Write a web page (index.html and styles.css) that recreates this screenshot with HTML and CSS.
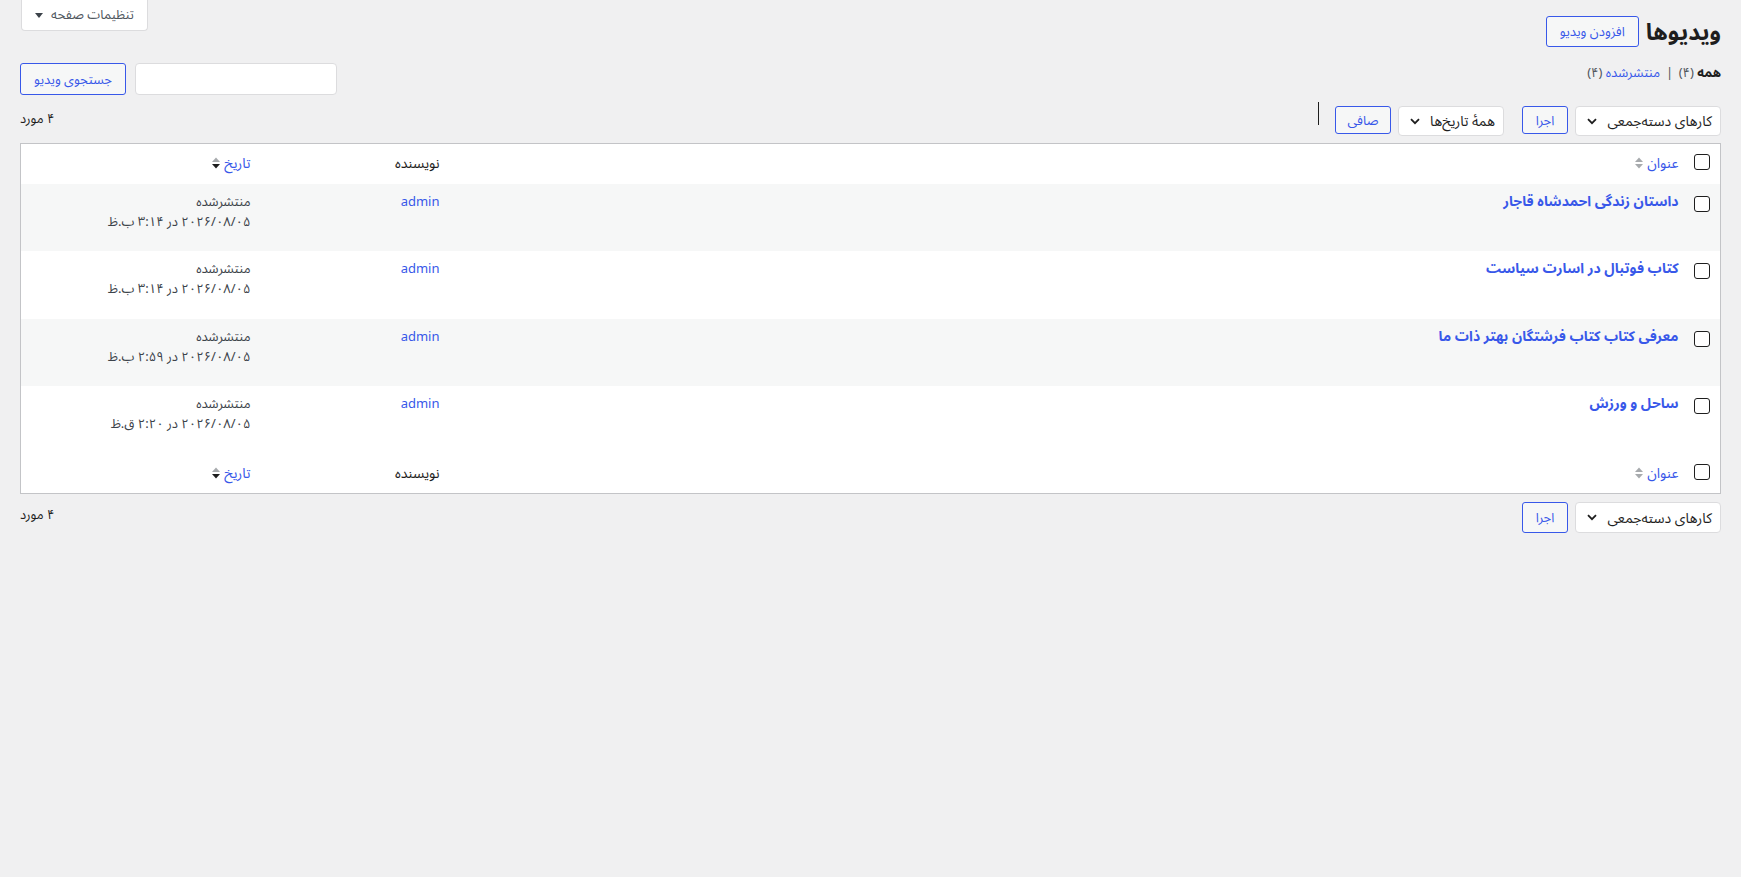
FILE: index.html
```html
<!DOCTYPE html>
<html lang="fa" dir="rtl">
<head>
<meta charset="utf-8">
<title>ویدیوها</title>
<link rel="stylesheet" href="styles.css">
</head>
<body>
<div class="wrap">
  <div class="top">
    <div class="heading">
      <h1 class="page-title">ویدیوها</h1>
      <a class="btn add-btn">افزودن ویدیو</a>
    </div>
    <button class="screen-options">تنظیمات صفحه <span class="tri"></span></button>
  </div>

  <div class="views-row">
    <ul class="subsubsub">
      <li><b>همه</b> <span class="count">(۴)</span> <span class="sep">|</span></li>
      <li><a class="link">منتشرشده <span class="count">(۴)</span></a></li>
    </ul>
    <div class="search-box">
      <input class="search-input" type="text">
      <a class="btn search-btn">جستجوی ویدیو</a>
    </div>
  </div>

  <div class="tablenav">
    <div class="actions">
      <div class="select bulk">کارهای دسته‌جمعی<svg class="chev" width="10" height="7" viewBox="0 0 10 7"><path d="M1 1.2 L5 5.2 L9 1.2" fill="none" stroke="#1e1e1e" stroke-width="1.8"/></svg></div>
      <a class="btn small-btn apply">اجرا</a>
      <div class="select dates">همهٔ تاریخ‌ها<svg class="chev" width="10" height="7" viewBox="0 0 10 7"><path d="M1 1.2 L5 5.2 L9 1.2" fill="none" stroke="#1e1e1e" stroke-width="1.8"/></svg></div>
      <a class="btn small-btn filter">صافی</a>
      <span class="caret-line"></span>
    </div>
    <div class="num">۴ مورد</div>
  </div>

  <table class="list">
    <colgroup>
      <col class="c-check">
      <col>
      <col class="c-author">
      <col class="c-date">
    </colgroup>
    <thead>
      <tr>
        <th class="check"><input type="checkbox" class="cb"></th>
        <th class="sortable"><a class="link">عنوان</a><svg class="sort" width="8" height="12" viewBox="0 0 8 12"><path d="M0 5 L4 0.5 L8 5 Z" fill="#a7aaad"/><path d="M0 7 L8 7 L4 11.5 Z" fill="#a7aaad"/></svg></th>
        <th>نویسنده</th>
        <th class="sortable"><a class="link">تاریخ</a><svg class="sort" width="8" height="12" viewBox="0 0 8 12"><path d="M0 5 L4 0.5 L8 5 Z" fill="#a7aaad"/><path d="M0 7 L8 7 L4 11.5 Z" fill="#1e1e1e"/></svg></th>
      </tr>
    </thead>
    <tbody>
      <tr class="alt">
        <td class="check"><input type="checkbox" class="cb"></td>
        <td><a class="row-title">داستان زندگی احمدشاه قاجار</a></td>
        <td><a class="link">admin</a></td>
        <td class="date">منتشرشده<br>۲۰۲۶/۰۸/۰۵ در ۳:۱۴ ب.ظ</td>
      </tr>
      <tr>
        <td class="check"><input type="checkbox" class="cb"></td>
        <td><a class="row-title">کتاب فوتبال در اسارت سیاست</a></td>
        <td><a class="link">admin</a></td>
        <td class="date">منتشرشده<br>۲۰۲۶/۰۸/۰۵ در ۳:۱۴ ب.ظ</td>
      </tr>
      <tr class="alt">
        <td class="check"><input type="checkbox" class="cb"></td>
        <td><a class="row-title">معرفی کتاب کتاب فرشتگان بهتر ذات ما</a></td>
        <td><a class="link">admin</a></td>
        <td class="date">منتشرشده<br>۲۰۲۶/۰۸/۰۵ در ۲:۵۹ ب.ظ</td>
      </tr>
      <tr>
        <td class="check"><input type="checkbox" class="cb"></td>
        <td><a class="row-title">ساحل و ورزش</a></td>
        <td><a class="link">admin</a></td>
        <td class="date">منتشرشده<br>۲۰۲۶/۰۸/۰۵ در ۲:۲۰ ق.ظ</td>
      </tr>
    </tbody>
    <tfoot>
      <tr>
        <th class="check"><input type="checkbox" class="cb"></th>
        <th class="sortable"><a class="link">عنوان</a><svg class="sort" width="8" height="12" viewBox="0 0 8 12"><path d="M0 5 L4 0.5 L8 5 Z" fill="#a7aaad"/><path d="M0 7 L8 7 L4 11.5 Z" fill="#a7aaad"/></svg></th>
        <th>نویسنده</th>
        <th class="sortable"><a class="link">تاریخ</a><svg class="sort" width="8" height="12" viewBox="0 0 8 12"><path d="M0 5 L4 0.5 L8 5 Z" fill="#a7aaad"/><path d="M0 7 L8 7 L4 11.5 Z" fill="#1e1e1e"/></svg></th>
      </tr>
    </tfoot>
  </table>

  <div class="tablenav bottom">
    <div class="actions">
      <div class="select bulk">کارهای دسته‌جمعی<svg class="chev" width="10" height="7" viewBox="0 0 10 7"><path d="M1 1.2 L5 5.2 L9 1.2" fill="none" stroke="#1e1e1e" stroke-width="1.8"/></svg></div>
      <a class="btn small-btn apply">اجرا</a>
    </div>
    <div class="num">۴ مورد</div>
  </div>
</div>
</body>
</html>
```

FILE: styles.css
```css
* { box-sizing: border-box; }

html, body {
  margin: 0;
  background: #f0f0f1;
}

body {
  direction: rtl;
  font-family: "Noto Sans", "Noto Sans Arabic", "DejaVu Sans", sans-serif;
  font-size: 13px;
  line-height: 1.4;
  color: #1e1e1e;
}

.wrap {
  padding: 0 20px;
}

a { text-decoration: none; cursor: pointer; }

.link { color: #3858e9; }

.top {
  display: flex;
  justify-content: space-between;
  align-items: flex-start;
}

.heading {
  display: flex;
  align-items: center;
  gap: 7px;
  margin-top: 16px;
  height: 31px;
}

.page-title {
  margin: 0;
  font-size: 23px;
  font-weight: 700;
  line-height: 31px;
  color: #1e1e1e;
}

.btn {
  display: inline-flex;
  align-items: center;
  justify-content: center;
  border: 1px solid #3858e9;
  border-radius: 3px;
  background: #f6f7f7;
  color: #3858e9;
  font-size: 13px;
  white-space: nowrap;
}

.add-btn {
  width: 93px;
  height: 31px;
}

.screen-options {
  display: flex;
  align-items: center;
  justify-content: center;
  gap: 8px;
  width: 127px;
  height: 32px;
  margin: -1px 0 0 1px;
  border: 1px solid #dcdcde;
  border-top: none;
  border-radius: 0 0 4px 4px;
  background: #fff;
  color: #50575e;
  font: inherit;
  font-size: 13px;
  padding: 0;
}

.tri {
  width: 0;
  height: 0;
  border-left: 4px solid transparent;
  border-right: 4px solid transparent;
  border-top: 5px solid #3c434a;
  margin-top: 2px;
}

.views-row {
  display: flex;
  justify-content: space-between;
  align-items: flex-start;
  margin-top: 16px;
}

.subsubsub {
  list-style: none;
  margin: 0;
  padding: 0;
  display: flex;
  gap: 4px;
  line-height: 18px;
  color: #50575e;
}

.subsubsub b { color: #1e1e1e; }
.subsubsub .count { color: #50575e; }
.subsubsub .sep { margin: 0 2px; }

.search-box {
  display: flex;
  gap: 9px;
}

.search-input {
  width: 202px;
  height: 32px;
  border: 1px solid #dcdcde;
  border-radius: 4px;
  background: #fff;
  margin: 0;
}

.search-btn {
  width: 106px;
  height: 32px;
}

.tablenav {
  display: flex;
  justify-content: space-between;
  align-items: flex-start;
  height: 30px;
  margin-top: 11px;
}

.tablenav.bottom {
  margin-top: 8px;
  height: 31px;
}

.actions {
  display: flex;
  align-items: flex-start;
}

.select {
  display: flex;
  align-items: center;
  justify-content: space-between;
  height: 30px;
  padding: 0 8px 0 11px;
  background: #fff;
  border: 1px solid #dcdcde;
  border-radius: 4px;
  font-size: 14px;
  color: #1e1e1e;
  white-space: nowrap;
}

.bottom .select { height: 31px; }

.select .chev { margin-right: 10px; }

.bulk { width: 146px; }
.dates { width: 106px; }

.small-btn {
  height: 28px;
}

.bottom .small-btn { height: 31px; }

.apply {
  width: 46px;
  margin-right: 7px;
  margin-left: 18px;
}

.filter {
  width: 56px;
  margin-right: 7px;
}

.caret-line {
  width: 1px;
  height: 23px;
  background: #1e1e1e;
  margin: -4px 16px 0 0;
}

.num {
  line-height: 24px;
  color: #1e1e1e;
}

.list {
  width: 100%;
  margin-top: 7px;
  border: 1px solid #c3c4c7;
  border-collapse: collapse;
  border-spacing: 0;
  table-layout: fixed;
  background: #fff;
}

.c-check { width: 32px; }
.c-author { width: 189px; }
.c-date { width: 240px; }

.list th,
.list td {
  text-align: right;
  vertical-align: top;
  padding: 8px 10px;
  font-weight: 400;
  font-size: 13px;
  line-height: 20px;
}

.list thead tr,
.list tfoot tr {
  height: 40px;
}

.list thead th,
.list tfoot th {
  padding-top: 9px;
  font-size: 14px;
}

.list tbody tr { height: 67.5px; }

.list tbody td { padding-top: 7px; }

.list tr.alt { background: #f6f7f7; }

.list .check {
  padding: 10px 10px 0 0;
}

.list tbody .check { padding-top: 12px; }

.cb {
  appearance: none;
  -webkit-appearance: none;
  display: block;
  width: 16px;
  height: 16px;
  margin: 0;
  border: 1px solid #1e1e1e;
  border-radius: 3px;
  background: #fff;
}

.sortable .sort {
  margin-right: 4px;
  vertical-align: -1px;
}

.row-title {
  color: #3858e9;
  font-weight: 700;
  font-size: 14px;
}

.date { color: #3c434a; }
```
